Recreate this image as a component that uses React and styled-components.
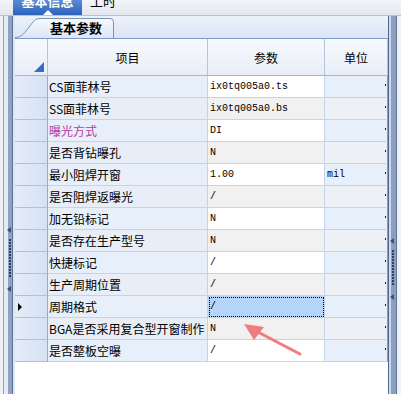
import React from 'react';
import styled, { createGlobalStyle } from 'styled-components';

const GlobalStyle = createGlobalStyle`
  * { box-sizing: border-box; }
  html, body { margin: 0; padding: 0; background: #fff; }
  body { font-family: "Noto Sans CJK SC", "Noto Sans", sans-serif; }
`;

const Screen = styled.div`
  position: relative;
  width: 401px;
  height: 394px;
  overflow: hidden;
  background: #fff;
  display: flex;
  flex-direction: column;
`;

const TopBar = styled.div`
  flex: 0 0 16px;
  display: flex;
  gap: 8px;
  padding-left: 13px;
  background: linear-gradient(#f1f4f8, #e3e8ef);
  border-bottom: 1px solid #b7c3d4;
  overflow: hidden;
`;

const TopTab = styled.div`
  position: relative;
  width: ${(p) => (p.$active ? '69px' : 'auto')};
  text-align: center;
  font-size: 13px;
  line-height: 13px;
  font-weight: ${(p) => (p.$active ? 'bold' : 'normal')};
  color: ${(p) => (p.$active ? '#fff' : '#000')};
  background: ${(p) => (p.$active ? 'linear-gradient(#5b8ad6, #2c62bb)' : 'transparent')};

  span {
    display: block;
    margin-top: -6px;
  }

  &::after {
    content: '';
    display: ${(p) => (p.$active ? 'block' : 'none')};
    position: absolute;
    left: 30px;
    bottom: 0;
    border-left: 5px solid transparent;
    border-right: 5px solid transparent;
    border-bottom: 5px solid #fff;
  }
`;

const Body = styled.div`
  flex: 1;
  display: flex;
  min-height: 0;
`;

const LeftRail = styled.div`
  flex: 0 0 15px;
  display: flex;
`;

const RailEdge = styled.div`
  flex: 0 0 4px;
  background: #eff1f4;
  border-right: 1px solid #98a4b5;
`;

const Splitter = styled.div`
  flex: 1;
  display: flex;
  flex-direction: column;
  align-items: ${(p) => (p.$side === 'left' ? 'flex-start' : 'flex-start')};
  padding-top: ${(p) => p.$gripTop}px;
  padding-left: ${(p) => p.$gripLeft}px;
  background: ${(p) =>
    p.$side === 'left'
      ? 'linear-gradient(to right, #e4ebf5 0 4px, #8fa2c1 4px 8px, #5b7199 8px 9px, #dde6f3 9px)'
      : 'linear-gradient(to right, #4f6a96 0 1px, #cfd8e5 1px 3px, #8a9ebf 3px 8px, #5f7598 8px 9px, #eef2f8 9px)'};
`;

const GripArrow = styled.div`
  width: 0;
  height: 0;
  border-top: 3px solid transparent;
  border-bottom: 3px solid transparent;
  border-right: 4px solid #3a4f7a;
`;

const GripDots = styled.div`
  width: 2px;
  height: ${(p) => p.$len}px;
  margin: 6px 0 8px 2px;
  background: repeating-linear-gradient(#2e3f63 0 2px, transparent 2px 3px);
`;

const Main = styled.div`
  flex: 0 0 373px;
  display: flex;
  flex-direction: column;
`;

const TabStrip = styled.div`
  flex: 0 0 22px;
  display: flex;
  align-items: flex-end;
  background: linear-gradient(#edf2fa, #d9e4f4);
`;

const PageTab = styled.div`
  position: relative;
  width: 99px;
  height: 20px;
  padding-left: 35px;
  font-size: 13px;
  line-height: 20px;
  font-weight: bold;
  color: #000;

  svg {
    position: absolute;
    left: 0;
    top: 0;
  }

  span {
    position: relative;
  }
`;

const Grid = styled.div`
  display: grid;
  grid-template-columns: 33px 160px 117px 63px;
  grid-template-rows: 37px;
  grid-auto-rows: 22px;
  border-top: 1px solid #7b9bcb;
`;

const HeaderCell = styled.div`
  position: relative;
  display: flex;
  align-items: center;
  justify-content: center;
  font-size: 12px;
  color: #000;
  background: linear-gradient(#f7f9fc, #e8eef8);
  border-right: 1px solid #b3c5de;
  border-bottom: 1px solid #9fb6d6;

  &::after {
    content: '';
    display: ${(p) => (p.$corner ? 'block' : 'none')};
    position: absolute;
    right: 3px;
    bottom: 3px;
    border-left: 10px solid transparent;
    border-bottom: 10px solid #3a6cc0;
  }
`;

const IndicatorCell = styled.div`
  display: flex;
  align-items: center;
  padding-left: 3px;
  background: linear-gradient(to right, #e4ecf8, #d6e2f3);
  border-right: 1px solid #93abcf;
  border-bottom: 1px solid #aec2df;
`;

const RowPointer = styled.div`
  width: 0;
  height: 0;
  border-top: 4px solid transparent;
  border-bottom: 4px solid transparent;
  border-left: 4px solid #000;
`;

const NameCell = styled.div`
  display: flex;
  align-items: center;
  padding-left: 1px;
  overflow: hidden;
  white-space: nowrap;
  font-size: 12px;
  color: ${(p) => (p.$accent ? '#bd38a0' : '#000')};
  background: ${(p) => (p.$even ? '#e9eef6' : '#e7effa')};
  border-right: 1px solid #c3d3ea;
  border-bottom: 1px solid #c3d3ea;
`;

const ValueCell = styled.div`
  display: flex;
  align-items: center;
  padding-left: 2px;
  font-family: "Liberation Mono", "DejaVu Sans Mono", monospace;
  font-size: 10px;
  color: #000;
  background: ${(p) => (p.$selected ? '#b4d5f7' : p.$even ? '#f1f1f1' : '#fff')};
  border-right: 1px solid #c3d3ea;
  border-bottom: 1px solid #c3d3ea;
  outline: ${(p) => (p.$selected ? '1px dotted #000' : 'none')};
  outline-offset: -2px;
`;

const UnitCell = styled(ValueCell)`
  position: relative;
  background: ${(p) => (p.$even ? '#edf1f6' : '#e7effa')};
  border-right: 1px solid #7e9bc8;

  &::after {
    content: '';
    position: absolute;
    right: 1px;
    top: 8px;
    width: 1px;
    height: 2px;
    background: #222;
  }
`;

const Annotation = styled.svg`
  position: absolute;
  left: 0;
  top: 0;
  pointer-events: none;
`;

const rows = [
  { name: 'CS面菲林号', value: 'ix0tq005a0.ts' },
  { name: 'SS面菲林号', value: 'ix0tq005a0.bs' },
  { name: '曝光方式', value: 'DI', accent: true },
  { name: '是否背钻曝孔', value: 'N' },
  { name: '最小阻焊开窗', value: '1.00', unit: 'mil' },
  { name: '是否阻焊返曝光', value: '/' },
  { name: '加无铅标记', value: 'N' },
  { name: '是否存在生产型号', value: 'N' },
  { name: '快捷标记', value: '/' },
  { name: '生产周期位置', value: '/' },
  { name: '周期格式', value: '/', current: true },
  { name: 'BGA是否采用复合型开窗制作', value: 'N' },
  { name: '是否整板空曝', value: '/' },
];

const App = () => {
  return (
    <Screen>
      <GlobalStyle />
      <TopBar>
        <TopTab $active>
          <span>基本信息</span>
        </TopTab>
        <TopTab>
          <span>工时</span>
        </TopTab>
      </TopBar>
      <Body>
        <LeftRail>
          <RailEdge />
          <Splitter $side="left" $gripTop={211} $gripLeft={3}>
            <GripArrow />
            <GripDots $len={39} />
            <GripArrow />
          </Splitter>
        </LeftRail>
        <Main>
          <TabStrip>
            <PageTab>
              <svg width="99" height="20" viewBox="0 0 99 20">
                <defs>
                  <linearGradient id="tabFill" x1="0" y1="0" x2="0" y2="1">
                    <stop offset="0" stopColor="#f7f9fd" />
                    <stop offset="1" stopColor="#dbe6f5" />
                  </linearGradient>
                </defs>
                <path
                  d="M0,20 C5,20 8,17 11,13 L18,4 C20,1.5 22,1 25,1 L95,1 Q98,1 98,4 L98,20 Z"
                  fill="url(#tabFill)"
                />
                <path
                  d="M0,19.5 C5,19.5 8,17 11,13 L18,4 C20,1.5 22,0.5 25,0.5 L95,0.5 Q98.5,0.5 98.5,4 L98.5,20"
                  fill="none"
                  stroke="#7893bb"
                  strokeWidth="1"
                />
              </svg>
              <span>基本参数</span>
            </PageTab>
          </TabStrip>
          <Grid>
            <HeaderCell $corner />
            <HeaderCell>项目</HeaderCell>
            <HeaderCell>参数</HeaderCell>
            <HeaderCell>单位</HeaderCell>
            {rows.map((row, i) => {
              const even = i % 2 === 1;
              return (
                <React.Fragment key={row.name}>
                  <IndicatorCell>{row.current && <RowPointer />}</IndicatorCell>
                  <NameCell $even={even} $accent={row.accent}>
                    {row.name}
                  </NameCell>
                  <ValueCell $even={even} $selected={row.current}>
                    {row.value}
                  </ValueCell>
                  <UnitCell $even={even}>{row.unit}</UnitCell>
                </React.Fragment>
              );
            })}
          </Grid>
        </Main>
        <Splitter $side="right" $gripTop={222} $gripLeft={2}>
          <GripArrow />
          <GripDots $len={36} />
          <GripArrow />
        </Splitter>
      </Body>
      <Annotation width="401" height="394" viewBox="0 0 401 394">
        <line x1="300" y1="354" x2="254" y2="330" stroke="#ef7d7d" strokeWidth="3" strokeLinecap="round" />
        <polygon points="244,324 264,327 254,340" fill="#ef7d7d" />
      </Annotation>
    </Screen>
  );
};

export default App;
